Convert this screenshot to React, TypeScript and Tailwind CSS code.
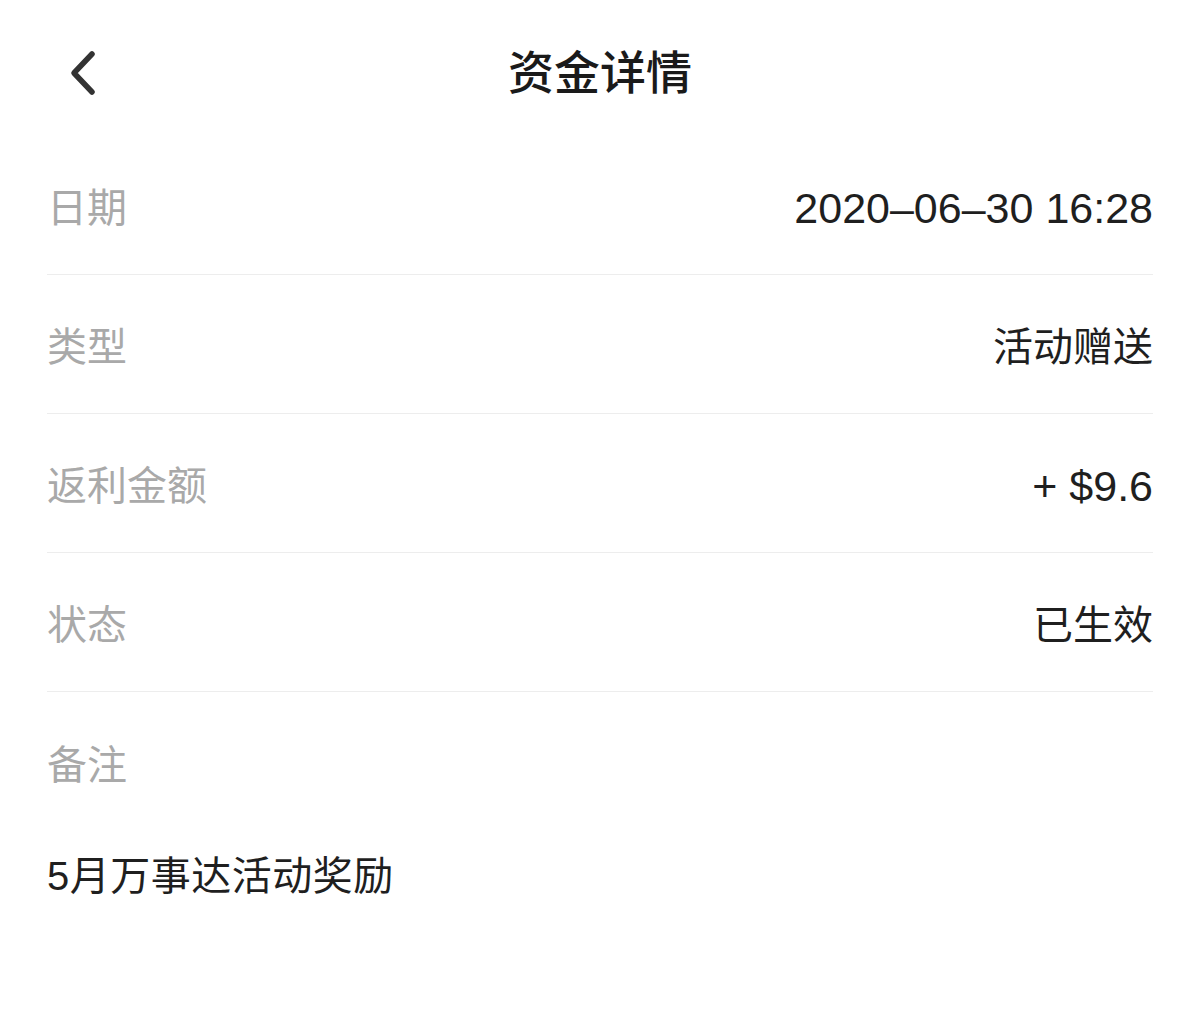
const rows = [
  { label: '日期', value: '2020–06–30 16:28', latin: true },
  { label: '类型', value: '活动赠送' },
  { label: '返利金额', value: '+ $9.6', latin: true },
  { label: '状态', value: '已生效' },
]

const BackIcon = () => (
  <svg width="40" height="56" viewBox="0 0 40 56" fill="none">
    <path d="M29 9 L11 28 L29 47" stroke="#333333" strokeWidth="5.5" strokeLinecap="round" strokeLinejoin="round" />
  </svg>
)

export default function App() {
  return (
    <div
      className="w-[1200px] min-h-[1023px] bg-white text-[#1f1f1f]"
      style={{ fontFamily: '"Liberation Sans", "Noto Sans CJK SC", sans-serif' }}
    >
      <header className="relative h-[136px] flex justify-center pt-[45px]">
        <button className="absolute left-[63px] top-[45px]">
          <BackIcon />
        </button>
        <h1 className="text-[46px] leading-[56px] font-medium text-[#1a1a1a]">资金详情</h1>
      </header>

      <main className="px-[47px]">
        {rows.map((r) => (
          <div key={r.label} className="h-[139px] pt-[6px] flex items-center justify-between border-b border-[#ededed]">
            <span className="text-[40px] text-[#a9a9a9]">{r.label}</span>
            <span className={r.latin ? 'text-[43px]' : 'text-[40px]'}>{r.value}</span>
          </div>
        ))}
        <div className="h-[139px] pt-[6px] flex items-center">
          <span className="text-[40px] text-[#a9a9a9]">备注</span>
        </div>
        <p className="pt-[17px] text-[40px] leading-[56px] tracking-[0.5px]">5月万事达活动奖励</p>
      </main>
    </div>
  )
}
